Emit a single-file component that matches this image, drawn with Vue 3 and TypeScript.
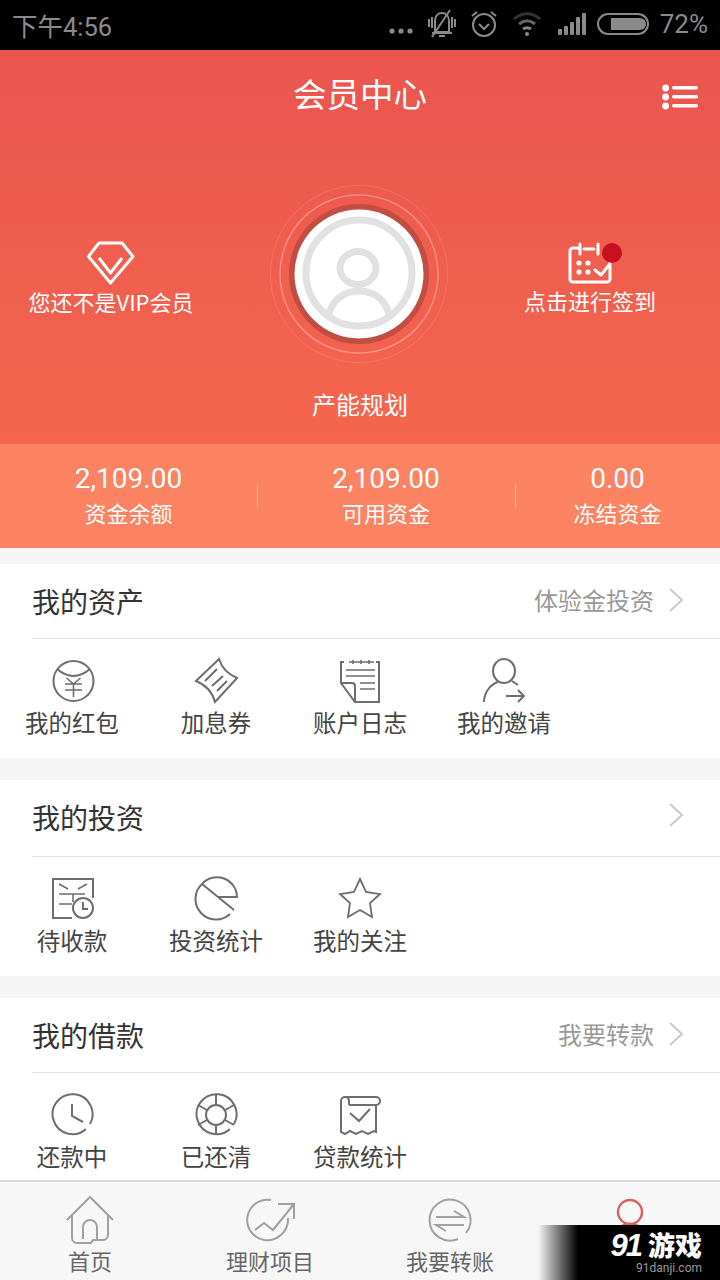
<template>
  <div class="page">
    <div class="status">
      <span class="clock">下午4:56</span>
      <div class="status-right">
        <svg width="28" height="8" viewBox="0 0 28 8" class="dots"><circle cx="4" cy="4" r="2.6" /><circle cx="13" cy="4" r="2.6" /><circle cx="22" cy="4" r="2.6" /></svg>
        <svg width="32" height="34" viewBox="0 0 32 34" fill="none" stroke="#8a8a8a" stroke-width="2">
          <path d="M9 25V14c0-5 3-8 7-8s7 3 7 8v11H9z" />
          <path d="M6 26h20M13 29h6M6 30L24 3" />
          <path d="M3 12v8M6 10v11M26 10v11M29 12v8" />
        </svg>
        <svg class="alarm" width="30" height="30" viewBox="0 0 30 30" fill="none" stroke="#8a8a8a" stroke-width="2">
          <circle cx="15" cy="16" r="11" />
          <path d="M10 15l5 5 5-5M3 7l5-4M27 7l-5-4" />
        </svg>
        <svg class="wifi" width="30" height="26" viewBox="0 0 30 26" fill="none" stroke="#333" stroke-width="3">
          <path d="M2 8c8-7 18-7 26 0" />
          <path d="M7 13c5-4 11-4 16 0" stroke="#666" />
          <path d="M11 18c3-2 5-2 8 0" stroke="#8a8a8a" />
          <circle cx="15" cy="23" r="2" fill="#8a8a8a" stroke="none" />
        </svg>
        <svg class="signal" width="30" height="26" viewBox="0 0 30 26" fill="#8a8a8a">
          <rect x="1" y="18" width="4" height="6" rx="1" /><rect x="7" y="15" width="4" height="9" rx="1" /><rect x="13" y="11" width="4" height="13" rx="1" /><rect x="19" y="6" width="4" height="18" rx="1" /><rect x="25" y="2" width="4" height="22" rx="1" />
        </svg>
        <svg width="53" height="24" viewBox="0 0 53 24">
          <rect x="1" y="2" width="50" height="20" rx="10" fill="none" stroke="#8a8a8a" stroke-width="2" />
          <path d="M14 6h29a6 6 0 0 1 0 12H14z" fill="#8a8a8a" />
        </svg>
        <span class="battery">72%</span>
      </div>
    </div>

    <header class="hero">
      <div class="title-row">
        <h1>会员中心</h1>
        <svg class="menu" width="36" height="26" viewBox="0 0 36 26" fill="#fff">
          <circle cx="3.6" cy="4" r="3.4" /><circle cx="3.6" cy="13" r="3.4" /><circle cx="3.6" cy="22" r="3.4" />
          <rect x="10" y="2" width="26" height="3.6" rx="1.8" /><rect x="10" y="11" width="26" height="3.6" rx="1.8" /><rect x="10" y="20" width="26" height="3.6" rx="1.8" />
        </svg>
      </div>

      <div class="hero-row">
        <div class="hero-side">
          <svg width="48" height="44" viewBox="0 0 48 44" fill="none" stroke="#fff" stroke-width="3" stroke-linejoin="round">
            <path d="M12 2h23l11 13.5L23.5 42 1.5 15.500z" />
            <path d="M12 17l11.500 15L35 17" />
          </svg>
          <span>您还不是VIP会员</span>
        </div>
        <svg class="avatar" width="180" height="180" viewBox="0 0 180 180">
          <circle cx="90" cy="90" r="88.5" fill="none" stroke="#fff" stroke-opacity=".12" />
          <circle cx="90" cy="90" r="79" fill="none" stroke="#fff" stroke-opacity=".3" stroke-width="1.5" />
          <circle cx="90" cy="90" r="70" fill="#c24d43" />
          <circle cx="90" cy="90" r="64.5" fill="#fff" />
          <circle cx="90" cy="89" r="53" fill="none" stroke="#e1e1e1" stroke-width="7" />
          <ellipse cx="89" cy="84" rx="18" ry="16.500" fill="none" stroke="#e1e1e1" stroke-width="7" />
          <path d="M59 134c3-17 15-27 31-27s28 10 31 27" fill="none" stroke="#e1e1e1" stroke-width="7" />
        </svg>
        <div class="hero-side">
          <div class="cal">
            <svg width="44" height="42" viewBox="0 0 44 42" fill="none" stroke="#fff" stroke-width="3" stroke-linejoin="round" stroke-linecap="round">
              <path d="M10 6H5a3 3 0 0 0-3 3v28a3 3 0 0 0 3 3h34a3 3 0 0 0 3-3V20" />
              <path d="M12 2v10M30 2v10M16 7h10" />
              <path d="M27 28l6 5 8-10" />
              <g fill="#fff" stroke="none"><circle cx="11" cy="21" r="2.6" /><circle cx="20" cy="21" r="2.6" /><circle cx="11" cy="30" r="2.6" /><circle cx="20" cy="30" r="2.6" /></g>
            </svg>
            <i class="red-dot"></i>
          </div>
          <span>点击进行签到</span>
        </div>
      </div>

      <p class="user-name">产能规划</p>
    </header>

    <div class="stats">
      <div v-for="s in stats" :key="s.label" class="stat">
        <strong>{{ s.value }}</strong>
        <span>{{ s.label }}</span>
      </div>
    </div>

    <section v-for="sec in sections" :key="sec.title" class="card">
      <div class="card-head" :class="sec.cls">
        <h2>{{ sec.title }}</h2>
        <span class="more">{{ sec.more }}</span>
        <svg class="chev" width="16" height="26" viewBox="0 0 16 26" fill="none" stroke="#c8c8c8" stroke-width="2"><path d="M2 2l12 11L2 24" /></svg>
      </div>
      <div class="grid">
        <div v-for="item in sec.items" :key="item.label" class="cell">
          <svg width="48" height="48" viewBox="0 0 48 48" fill="none" stroke="#6e6e6e" stroke-width="2" v-html="item.icon"></svg>
          <span>{{ item.label }}</span>
        </div>
      </div>
    </section>

    <nav class="tabs">
      <div class="tab">
        <svg width="50" height="50" viewBox="0 0 50 50" fill="none" stroke="#a0a0a0" stroke-width="2">
          <path d="M2 25L25 2l23 23" />
          <path d="M7 20v23a5 5 0 0 0 5 5h14l2-3h10a5 5 0 0 0 5-5V20" />
          <path d="M18 44V32a7 7 0 0 1 14 0v12" />
        </svg>
        <span>首页</span>
      </div>
      <div class="tab">
        <svg width="50" height="50" viewBox="0 0 50 50" fill="none" stroke="#a0a0a0" stroke-width="2">
          <path d="M26 5A20.300 20.300 0 0 0 19 45" />
          <path d="M43 23A21 21 0 0 1 19 45" />
          <path d="M10 35l9-7 9 7 21-26" />
          <path d="M33 9h16v15" />
        </svg>
        <span>理财项目</span>
      </div>
      <div class="tab">
        <svg width="50" height="50" viewBox="0 0 50 50" fill="none" stroke="#a0a0a0" stroke-width="2">
          <path d="M33 44A20.5 20.5 0 1 1 41 38" />
          <path d="M11 22h28l-10-6M39 30H11l10 6" />
        </svg>
        <span>我要转账</span>
      </div>
      <div class="tab">
        <svg width="50" height="50" viewBox="0 0 50 50" fill="none" stroke="#d5635c" stroke-width="2.4">
          <ellipse cx="25" cy="17" rx="12" ry="12" />
          <path d="M8 46c1-10 8-17 17-17s16 7 17 17" />
        </svg>
      </div>
    </nav>

    <div class="watermark">
      <b><em>91</em>游戏</b>
      <small>91danji.com</small>
    </div>
  </div>
</template>

<script setup lang="ts">
interface Item {
  label: string
  icon: string
}

const stats = [
  { value: '2,109.00', label: '资金余额' },
  { value: '2,109.00', label: '可用资金' },
  { value: '0.00', label: '冻结资金' },
]

const sections: { title: string; more: string; cls: string; items: Item[] }[] = [
  {
    title: '我的资产',
    more: '体验金投资',
    cls: 'first',
    items: [
      {
        label: '我的红包',
        icon: '<circle cx="25.5" cy="24" r="20"/><path d="M9 12Q25.5 26 42 12"/><path d="M18.500 21l7 6 7-6M17 27h17M17 33h17M25.500 27v13" stroke-width="1.600"/>',
      },
      {
        label: '加息券',
        icon: '<path d="M4 24L27 2Q31 15 45 21L23 45Q19 30 4 24z"/><path d="M13 24l12-12M20 29l11-10M25 34l10-10"/>',
      },
      {
        label: '账户日志',
        icon: '<path d="M8 5H5v21l14 19h24V5h-3"/><path d="M5 26h11a3 3 0 0 1 3 3v16"/><path d="M13 5h25M17 3v4M25 3v4M33 3v4M10 13h29M10 19h29M24 26h15M24 32h15" stroke-width="1.500"/>',
      },
      {
        label: '我的邀请',
        icon: '<ellipse cx="24" cy="14" rx="11" ry="12"/><path d="M4 45c0-10 7-18 14-20M32 24l6 4"/><path d="M26 39h17M38 33l6 6-6 6"/>',
      },
    ],
  },
  {
    title: '我的投资',
    more: '',
    cls: 'tall',
    items: [
      {
        label: '待收款',
        icon: '<path d="M24 43H5V4h40v19"/><path d="M11 9l9 5M39 9l-9 5M11 19h26M11 29h13M25 19v8" stroke-width="1.600"/><circle cx="35" cy="33" r="10"/><path d="M35 27v7h5"/>',
      },
      {
        label: '投资统计',
        icon: '<path d="M10 9A20 20 0 0 1 45 22H26"/><path d="M10 9A20 20 0 0 0 38 39"/><path d="M10 9l32 26"/>',
      },
      {
        label: '我的关注',
        icon: '<path d="M24 4l6 13 14 2-10 9 2 14-12-7-12 7 2-14-10-9 14-2z" stroke-width="1.800"/>',
      },
    ],
  },
  {
    title: '我的借款',
    more: '我要转款',
    cls: 'low',
    items: [
      {
        label: '还款中',
        icon: '<path d="M38 38A20 20 0 1 1 42 33"/><path d="M24 13v12l11 6"/>',
      },
      {
        label: '已还清',
        icon: '<path d="M38 38A20 20 0 1 1 42 33"/><circle cx="24" cy="24" r="10"/><path d="M24 4v10M24 34v10M6 14l9 5M33 29l9 5M6 34l9-5M33 19l9-5"/>',
      },
      {
        label: '贷款统计',
        icon: '<path d="M9 6h31a4 4 0 0 1 0 8H13"/><path d="M5 10v31l4 2 5-3 6 3 6-3 6 3 6-3 2 1V14"/><path d="M5 10a4 4 0 0 1 8 0v4"/><path d="M14 22l9 8 11-12"/>',
      },
    ],
  },
]
</script>

<style>
html,
body {
  margin: 0;
  background: #f5f5f5;
}
</style>

<style scoped>
.page {
  position: relative;
  width: 720px;
  height: 1280px;
  overflow: hidden;
  background: #f5f5f5;
  font-family: "Noto Sans CJK SC", "Liberation Sans", sans-serif;
}

.status {
  height: 50px;
  background: #000;
  color: #8a8a8a;
  display: flex;
  justify-content: space-between;
  align-items: center;
  padding: 0 12px 2px;
  box-sizing: border-box;
}

.clock,
.battery {
  font-family: Roboto, "Noto Sans CJK SC", sans-serif;
  font-size: 26px;
}

.clock {
  font-size: 25.5px;
}

.status-right {
  display: flex;
  align-items: center;
  gap: 10px;
}

.dots {
  fill: #8a8a8a;
  margin-top: 14px;
}

.alarm {
  margin-left: 1px;
}

.wifi {
  margin-left: 3px;
}

.signal {
  margin-left: 5px;
}

.hero {
  height: 394px;
  background: linear-gradient(#ea554f, #f5664e);
  color: #fff;
}

.title-row {
  height: 90px;
  display: flex;
  justify-content: center;
  align-items: center;
  position: relative;
  padding-bottom: 6px;
  box-sizing: border-box;
}

h1 {
  margin: 0;
  font-size: 33.5px;
  font-weight: 400;
}

.menu {
  position: absolute;
  right: 22px;
  top: 34px;
}

.hero-row {
  display: grid;
  grid-template-columns: 222px 274px 188px;
  align-items: center;
  margin-top: 44px;
}

.hero-side {
  display: flex;
  flex-direction: column;
  align-items: center;
  font-size: 22px;
  margin-top: 8px;
}

.hero-side span {
  line-height: 30px;
  margin-top: 1px;
}

.avatar {
  justify-self: center;
}

.cal {
  position: relative;
  height: 42px;
}

.red-dot {
  position: absolute;
  right: -10px;
  top: 1px;
  width: 20px;
  height: 20px;
  border-radius: 50%;
  background: #c9101f;
}

.user-name {
  margin: 25px 0 0;
  text-align: center;
  font-size: 24px;
  line-height: 30px;
}

.stats {
  height: 104px;
  background: #fb8361;
  color: #fff;
  display: grid;
  grid-template-columns: 257px 258px 205px;
}

.stat {
  display: flex;
  flex-direction: column;
  align-items: center;
  justify-content: center;
  position: relative;
  padding-bottom: 2px;
  box-sizing: border-box;
}

.stat + .stat::before {
  content: "";
  position: absolute;
  left: 0;
  top: 40px;
  height: 24px;
  width: 1px;
  background: #fdb39e;
}

.stat strong {
  font-family: Roboto, sans-serif;
  font-weight: 400;
  font-size: 28px;
  line-height: 36px;
}

.stat span {
  font-size: 22px;
  line-height: 34px;
  margin-top: -2px;
}

.card {
  background: #fff;
  margin-top: 22px;
  height: 196px;
}

.card:first-of-type {
  margin-top: 16px;
  height: 194px;
}

.card-head {
  margin-left: 32px;
  height: 75px;
  border-bottom: 1px solid #e3e3e3;
  display: flex;
  align-items: center;
  padding-right: 36px;
  box-sizing: border-box;
}

.card-head.tall {
  height: 77px;
}

h2 {
  margin: 0;
  font-size: 28px;
  font-weight: 400;
  color: #333;
  flex: 1;
}

.tall h2 {
  margin-top: -2px;
}

.more {
  font-size: 24px;
  color: #999;
  margin: -4px 14px 0 0;
}

.chev {
  margin-top: -3px;
}

.tall .chev {
  margin-top: -6px;
}

.grid {
  display: grid;
  grid-template-columns: repeat(5, 144px);
  padding-top: 18px;
}

.cell {
  display: flex;
  flex-direction: column;
  align-items: center;
  font-size: 23.5px;
  color: #444;
}

.cell span {
  line-height: 34px;
}

.tabs {
  position: absolute;
  left: 0;
  right: 0;
  bottom: 0;
  height: 100px;
  border-top: 2px solid #d9d9d9;
  box-sizing: border-box;
  background: #f7f7f7;
  display: grid;
  grid-template-columns: repeat(4, 180px);
}

.tab {
  display: flex;
  flex-direction: column;
  align-items: center;
  padding-top: 13px;
  font-size: 22px;
  color: #666;
}

.tab span {
  line-height: 30px;
}

.watermark {
  position: absolute;
  right: 0;
  bottom: 0;
  width: 182px;
  height: 55px;
  box-sizing: border-box;
  background: linear-gradient(90deg, rgba(0, 0, 0, 0), #000 22%);
  color: #fff;
  display: flex;
  flex-direction: column;
  align-items: flex-end;
  gap: 3px;
  padding: 6px 18px 0 0;
}

.watermark b {
  font-size: 27px;
  line-height: 27px;
  font-weight: 900;
  white-space: nowrap;
}

.watermark em {
  font-family: "Liberation Sans", sans-serif;
  font-style: italic;
  font-size: 31px;
  line-height: 27px;
  letter-spacing: -2px;
  margin-right: 7px;
}

.watermark small {
  font-family: Roboto, sans-serif;
  font-size: 12px;
  line-height: 12px;
  color: #999;
}
</style>
